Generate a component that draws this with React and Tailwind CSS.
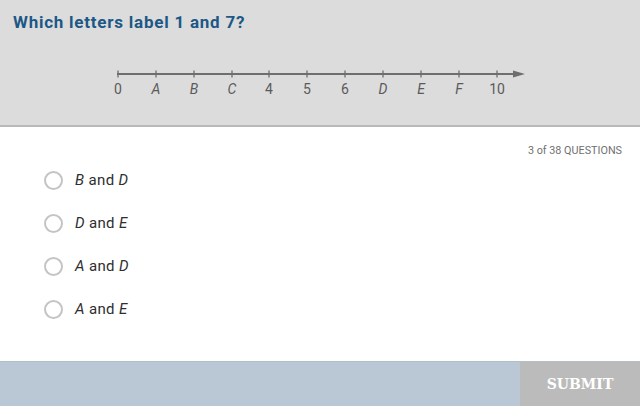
import React from "react";

const ticks = [
  { x: 118, l: "0", i: false },
  { x: 156, l: "A", i: true },
  { x: 194, l: "B", i: true },
  { x: 232, l: "C", i: true },
  { x: 269, l: "4", i: false },
  { x: 307, l: "5", i: false },
  { x: 345, l: "6", i: false },
  { x: 383, l: "D", i: true },
  { x: 421, l: "E", i: true },
  { x: 459, l: "F", i: true },
  { x: 497, l: "10", i: false },
];

function NumberLine() {
  return (
    <svg width="640" height="50" viewBox="0 55 640 50" className="block">
      <line x1="117" y1="74" x2="516" y2="74" stroke="#6e6e6e" strokeWidth="2" />
      <polygon points="513,70.5 525,74 513,77.5" fill="#6e6e6e" />
      {ticks.map((t) => (
        <g key={t.l}>
          <line x1={t.x} y1="70.5" x2={t.x} y2="77.5" stroke="#6e6e6e" strokeWidth="1.3" />
          <text
            x={t.x}
            y="94"
            textAnchor="middle"
            fontSize="14"
            fill="#5a5a5a"
            fontStyle={t.i ? "italic" : "normal"}
            fontFamily="Roboto, 'Liberation Sans', sans-serif"
          >
            {t.l}
          </text>
        </g>
      ))}
    </svg>
  );
}

const options = [
  ["B", "D"],
  ["D", "E"],
  ["A", "D"],
  ["A", "E"],
];

export default function App() {
  return (
    <div className="w-[640px] h-[416px] bg-white flex flex-col overflow-hidden" style={{ fontFamily: "Roboto, 'Liberation Sans', sans-serif" }}>
      <div className="h-[127px] bg-[#dcdcdc] border-b-2 border-[#b9b9b9] flex flex-col">
        <div className="pl-[13px] pt-[11px] text-[17px] leading-[22px] font-bold tracking-[0.045em] text-[#1c5886]">
          Which letters label 1 and 7?
        </div>
        <div className="mt-[22px]">
          <NumberLine />
        </div>
      </div>
      <div className="flex-1 flex flex-col">
        <div className="flex justify-end pr-[18px] pt-[18px] text-[10.8px] leading-[12px] text-[#707070]">
          3 of 38 QUESTIONS
        </div>
        <div className="flex flex-col pl-[44px] pt-[2px]">
          {options.map(([a, b]) => (
            <div key={a + b} className="h-[43px] flex items-center gap-[12px]">
              <span className="w-[19px] h-[19px] rounded-full border-2 border-[#c4c4c4] bg-white" />
              <span className="text-[15px] tracking-[0.35px] text-[#2e2e2e]">
                <i>{a}</i> and <i>{b}</i>
              </span>
            </div>
          ))}
        </div>
      </div>
      <div className="h-[45px] mb-[10px] flex bg-[#b9c8d4] border-t border-[#b3bfc6]">
        <div className="flex-1" />
        <div
          className="w-[120px] bg-[#bbbbbb] flex items-center justify-center text-white text-[14px] font-bold"
          style={{ fontFamily: "'DejaVu Serif', 'Liberation Serif', serif" }}
        >
          SUBMIT
        </div>
      </div>
    </div>
  );
}
